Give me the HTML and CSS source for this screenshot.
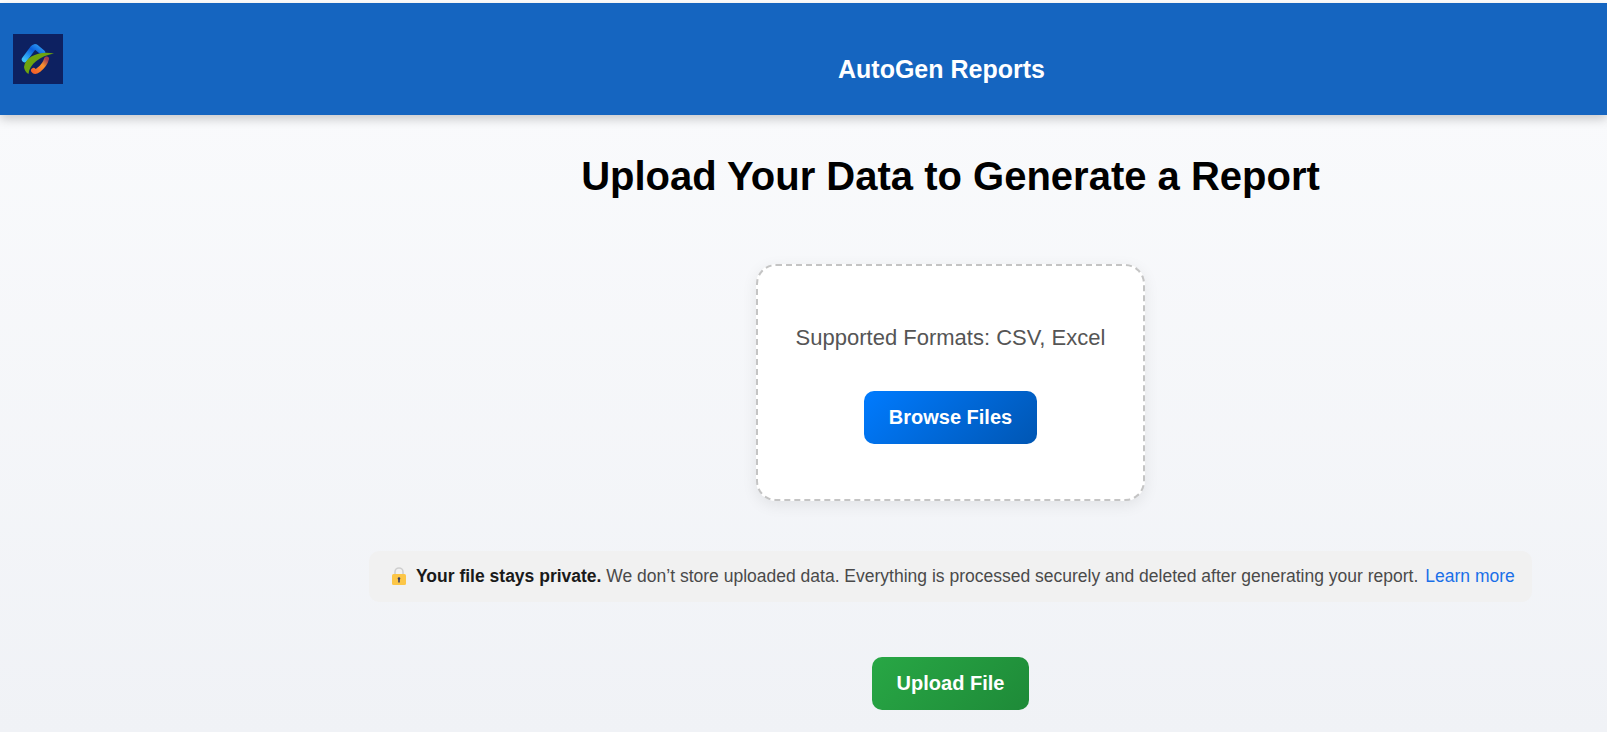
FILE: index.html
```html
<!DOCTYPE html>
<html lang="en">
<head>
    <meta charset="UTF-8">
    <meta name="viewport" content="width=device-width, initial-scale=1.0">
    <title>AutoGen Reports</title>
    <link rel="stylesheet" href="styles.css">
</head>
<body>
    <header class="top-bar">
        <svg class="logo" viewBox="0 0 50 50" width="50" height="50" aria-label="AutoGen logo">
            <defs>
                <linearGradient id="logoBlue" x1="0" y1="1" x2="1" y2="0">
                    <stop offset="0" stop-color="#3cc0f8"/>
                    <stop offset="0.6" stop-color="#0a5fdc"/>
                    <stop offset="1" stop-color="#2f9bf0"/>
                </linearGradient>
                <linearGradient id="logoOrange" x1="0" y1="1" x2="1" y2="0">
                    <stop offset="0" stop-color="#f4632a"/>
                    <stop offset="0.6" stop-color="#f9922e"/>
                    <stop offset="1" stop-color="#a03c50"/>
                </linearGradient>
            </defs>
            <rect width="50" height="50" fill="#0d2161"/>
            <path d="M11.500 25.500 L20 14 Q21.500 12 23.500 13.500 L29.500 18.500" fill="none" stroke="url(#logoBlue)" stroke-width="5.500" stroke-linecap="round" stroke-linejoin="round"/>
            <path d="M33.500 25 Q32 31 25.500 36 Q22 38.500 20.500 36.500" fill="none" stroke="url(#logoOrange)" stroke-width="5" stroke-linecap="round"/>
            <path d="M41 19.500 C27 16.500 12.500 22 11 33 Q11.500 37.500 15.500 40 C16.500 30 27 22 41 19.500 Z" fill="#6da30f"/>
        </svg>
        <h2 class="app-title">AutoGen Reports</h2>
    </header>

    <main class="content">
        <h1 class="page-title">Upload Your Data to Generate a Report</h1>

        <section class="drop-box">
            <p class="formats">Supported Formats: CSV, Excel</p>
            <button type="button" class="btn btn-browse">Browse Files</button>
        </section>

        <div class="privacy-note">
            <svg class="lock" viewBox="0 0 16 20" width="16" height="20" aria-hidden="true">
                <path d="M4 9 V6 a4 4 0 0 1 8 0 V9" fill="none" stroke="#cfcfcf" stroke-width="1.600"/>
                <rect x="1" y="8" width="14" height="11" rx="1.500" fill="#fcc647"/>
                <rect x="7.200" y="12" width="1.600" height="4.500" fill="#3a3f63"/>
                <circle cx="8" cy="12.500" r="1.300" fill="#3a3f63"/>
            </svg>
            <span class="privacy-text"><strong>Your file stays private.</strong> We don’t store uploaded data. Everything is processed securely and deleted after generating your report.</span>
            <a href="#" class="learn-more">Learn more</a>
        </div>

        <button type="button" class="btn btn-upload">Upload File</button>
    </main>
</body>
</html>
```

FILE: styles.css
```css
html, body {
    height: 100%;
}
body {
    font-family: "Liberation Sans", Arial, sans-serif;
    margin: 0;
    padding-top: 3px;
    box-sizing: border-box;
    background: #fff;
    overflow: hidden;
}
.top-bar {
    position: relative;
    display: flex;
    align-items: flex-start;
    height: 112px;
    padding: 31px 0 0 13px;
    box-sizing: border-box;
    background-color: #1565c0;
    box-shadow: 0 4px 10px rgba(0, 0, 0, 0.2);
}
.logo {
    flex: none;
}
.app-title {
    flex: 1;
    margin: 21px 0 0;
    padding-left: 775px;
    text-align: left;
    color: #fff;
    font-size: 25px;
    font-weight: bold;
}
.content {
    display: flex;
    flex-direction: column;
    align-items: center;
    height: 617px;
    padding: 38px 75px 0 369px;
    box-sizing: border-box;
    background: linear-gradient(to bottom, #f9fafc, #f0f2f6);
}
.page-title {
    margin: 0 0 65px;
    color: #000;
    font-size: 40px;
    line-height: 46px;
    white-space: nowrap;
}
.drop-box {
    width: 389px;
    height: 237px;
    padding: 59px 0 0;
    box-sizing: border-box;
    border: 2px dashed #c4c4c4;
    border-radius: 20px;
    background-color: #fff;
    box-shadow: 0 4px 15px rgba(0, 0, 0, 0.08);
    text-align: center;
}
.formats {
    margin: 0 0 41px;
    color: #555;
    font-size: 22px;
    line-height: 25px;
}
.btn {
    border: none;
    border-radius: 10px;
    color: #fff;
    font-family: inherit;
    font-size: 20px;
    font-weight: bold;
    height: 53px;
}
.btn-browse {
    width: 173px;
    background: linear-gradient(135deg, #007bff, #0056b3);
}
.privacy-note {
    display: flex;
    align-items: center;
    gap: 7px;
    width: 100%;
    height: 51px;
    margin-top: 50px;
    padding-left: 22px;
    box-sizing: border-box;
    border-radius: 10px;
    background-color: #f1f1f1;
    color: #4a4a4a;
    font-size: 17.500px;
    white-space: nowrap;
}
.privacy-note strong {
    color: #1a1a1a;
}
.privacy-text {
    margin-left: 2px;
}
.lock {
    flex: none;
    margin-bottom: 2px;
}
.learn-more {
    color: #1a6fe8;
    text-decoration: none;
}
.btn-upload {
    width: 157px;
    margin-top: 55px;
    background: linear-gradient(135deg, #28a745, #1e8a38);
}
```
